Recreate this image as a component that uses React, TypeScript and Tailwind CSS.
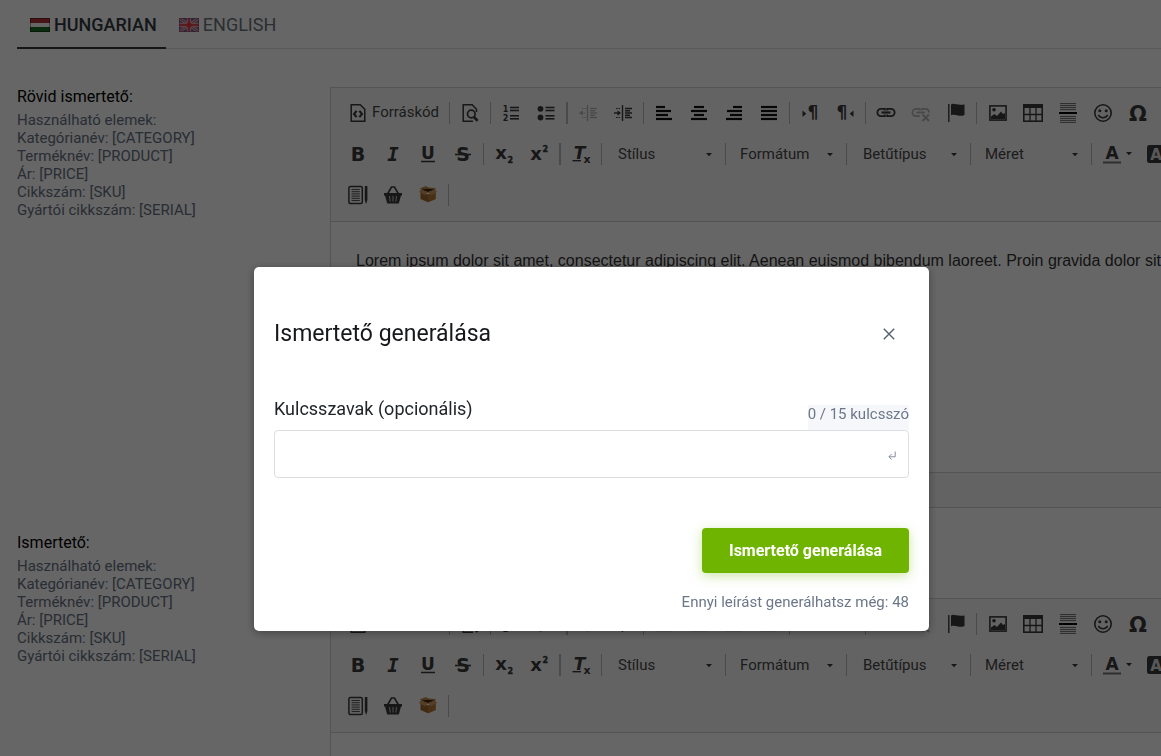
import React from "react";

type IconProps = { children: React.ReactNode; className?: string };

function Icon({ children, className = "" }: IconProps) {
  return (
    <svg viewBox="0 0 20 20" className={`size-5 shrink-0 overflow-visible ${className}`} aria-hidden="true">
      {children}
    </svg>
  );
}

const bold = { fontFamily: "DejaVu Sans", fontWeight: 700, textAnchor: "middle" as const };
const ink = "#3b3b3b";

const lines = (rows: [number, number, number][], w: number, color = ink) =>
  rows.map(([x1, x2, y]) => <path key={`${x1}-${y}`} d={`M${x1} ${y}H${x2}`} stroke={color} strokeWidth={w} />);

const docPath = "M3.2 1.7H12.2L16.8 6.3V18.3H3.2Z";

const icons: Record<string, React.ReactNode> = {
  source: (
    <g fill="none" stroke={ink}>
      <path d={docPath} strokeWidth="1.5" />
      <path d="M8.6 7.8L6 11L8.6 14.2M11.4 7.8L14 11L11.4 14.2" strokeWidth="2.1" />
    </g>
  ),
  preview: (
    <g fill="none" stroke={ink}>
      <path d="M16.5 9V6.3L12.2 1.7H3.2V18.3H13" strokeWidth="1.5" />
      <circle cx="11.3" cy="11" r="3.8" strokeWidth="1.7" />
      <path d="M14 14L17.6 17.8" strokeWidth="2.6" />
    </g>
  ),
  numbered: (
    <>
      {lines([[9, 18, 4.5], [9, 18, 7.5], [9, 18, 12.8], [9, 18, 15.8]], 1.6)}
      <text x="4.5" y="9" fontSize="8" fill={ink} {...bold}>1</text>
      <text x="4.5" y="18" fontSize="8" fill={ink} {...bold}>2</text>
    </>
  ),
  bullets: (
    <>
      {lines([[9.5, 18.5, 4.5], [9.5, 18.5, 7.5], [9.5, 18.5, 12.8], [9.5, 18.5, 15.8]], 1.6)}
      <circle cx="4.5" cy="5.8" r="2.9" fill={ink} />
      <circle cx="4.5" cy="14.5" r="2.9" fill={ink} />
    </>
  ),
  outdent: (
    <>
      <path d="M9.5 2V18" stroke={ink} strokeWidth="1.4" />
      <path d="M3 10H8M4 5.5H8M4 14.5H8" stroke={ink} strokeDasharray="1.5 1" />
      <path d="M4.8 7.3V12.7L1 10Z" fill={ink} />
      {lines([[12, 19, 5.5], [12, 17, 7.8], [12, 19, 10], [12, 17, 12.3], [12, 19, 14.5]], 1.3)}
    </>
  ),
  indent: (
    <>
      <path d="M9.5 2V18" stroke={ink} strokeWidth="1.4" />
      <path d="M1 10H5" stroke={ink} strokeWidth="1.4" />
      <path d="M3 5.5H8M3 14.5H8" stroke={ink} strokeDasharray="1.5 1" />
      <path d="M4.5 7.3V12.7L8 10Z" fill={ink} />
      {lines([[12, 19, 5.5], [12, 17, 7.8], [12, 19, 10], [12, 17, 12.3], [12, 19, 14.5]], 1.5)}
    </>
  ),
  left: <>{lines([[2, 11, 4], [2, 17, 8], [2, 14, 12], [2, 18, 16]], 2.2, "#111")}</>,
  center: <>{lines([[5, 15, 4], [2, 18, 8], [5, 15, 12], [2, 18, 16]], 2.2, "#111")}</>,
  right: <>{lines([[9, 18, 4], [3, 18, 8], [6, 18, 12], [2, 18, 16]], 2.2, "#111")}</>,
  justify: <>{lines([[2, 18, 4], [2, 18, 8], [2, 18, 12], [2, 18, 16]], 2.2, "#111")}</>,
  ltr: (
    <>
      <path d="M2.5 7.5V14L6.3 10.7Z" fill={ink} />
      <text x="13" y="14.5" fontSize="17" fill={ink} {...bold}>¶</text>
    </>
  ),
  rtl: (
    <>
      <path d="M18.5 7.5V14L14.7 10.7Z" fill={ink} />
      <text x="7" y="14.5" fontSize="17" fill={ink} {...bold}>¶</text>
    </>
  ),
  link: (
    <g fill="none" stroke={ink}>
      <path d="M8.8 7.5V5.9H5A3.6 3.6 0 0 0 5 13.1H8.8V11.5M11.2 7.5V5.9H15A3.6 3.6 0 0 1 15 13.1H11.2V11.5" strokeWidth="1.9" />
      <path d="M5.5 9.5H14.5" strokeWidth="2.2" />
    </g>
  ),
  unlink: (
    <g fill="none" stroke={ink}>
      <path d="M8.8 7.5V5.9H5A3.6 3.6 0 0 0 5 13.1H8.8M11.2 7.5V5.9H15A3.6 3.6 0 0 1 18 9.5" strokeWidth="1.7" />
      <path d="M5.5 9.5H14" strokeWidth="1.8" />
      <path d="M11.5 11.5L18 18M18 11.5L11.5 18" strokeWidth="2" />
    </g>
  ),
  flag: (
    <>
      <path d="M2.8 1V19" stroke={ink} strokeWidth="1.4" />
      <path d="M5 1.5C8-.5 10.5 2.8 18.5 1.4V12C13 14.5 9.5 10.4 5 12.3Z" fill={ink} />
    </>
  ),
  image: (
    <>
      <rect x="1.9" y="2.9" width="16.2" height="14.2" fill="none" stroke={ink} strokeWidth="1.6" />
      <circle cx="6" cy="6.8" r="1.8" fill={ink} />
      <path d="M3 16V13.5L6.5 11L9 13L13 8.5L15 11L17 10V16Z" fill={ink} />
    </>
  ),
  table: (
    <>
      <rect x="0.8" y="1.8" width="18.4" height="16.4" fill="none" stroke={ink} strokeWidth="1.6" />
      <path d="M1 3.2H19" stroke={ink} strokeWidth="3.6" />
      <path d="M7 4V18M13 4V18M1 11.5H19" stroke={ink} strokeWidth="1.3" />
    </>
  ),
  rule: (
    <>
      {lines([[2, 18, 0.6], [2, 18, 2.6], [2, 18, 4.6], [2, 18, 6.6], [2, 18, 13.4], [2, 18, 15.4], [2, 18, 17.4], [2, 18, 19.4]], 0.9, "#5a5a5a")}
      <path d="M1 10H19" stroke="#000" strokeWidth="2" />
    </>
  ),
  smiley: (
    <>
      <circle cx="10" cy="10" r="8.2" fill="none" stroke={ink} strokeWidth="1.6" />
      <circle cx="6.8" cy="7.8" r="1.5" fill={ink} />
      <circle cx="13.2" cy="7.8" r="1.5" fill={ink} />
      <path d="M5.3 12C7.5 15.5 12.5 15.5 14.7 12" fill="none" stroke={ink} strokeWidth="1.5" />
    </>
  ),
  omega: <text x="10" y="18" fontSize="21" fill={ink} {...bold}>Ω</text>,
  bold: <text x="10" y="17" fontSize="19" fill={ink} {...bold}>B</text>,
  italic: (
    <text x="10" y="17" fontSize="19" fill={ink} fontFamily="DejaVu Sans Mono" fontWeight="700" fontStyle="italic" textAnchor="middle">I</text>
  ),
  underline: (
    <>
      <text x="10" y="14.5" fontSize="17" fill={ink} {...bold}>U</text>
      <path d="M3 17.5H17" stroke={ink} strokeWidth="1.5" />
    </>
  ),
  strike: (
    <>
      <text x="10" y="17" fontSize="19" fill={ink} {...bold}>S</text>
      <path d="M2 10.5H18" stroke={ink} strokeWidth="1.6" />
    </>
  ),
  sub: (
    <>
      <text x="7" y="14.5" fontSize="18" fill={ink} {...bold}>x</text>
      <text x="16.3" y="18.8" fontSize="8" fill={ink} stroke={ink} strokeWidth="0.4" {...bold}>2</text>
    </>
  ),
  sup: (
    <>
      <text x="7" y="16" fontSize="18" fill={ink} {...bold}>x</text>
      <text x="16.3" y="8" fontSize="8" fill={ink} stroke={ink} strokeWidth="0.4" {...bold}>2</text>
    </>
  ),
  clear: (
    <>
      <text x="8.5" y="15" fontSize="17" fontStyle="italic" fill={ink} {...bold}>T</text>
      <path d="M1.5 16.7H10" stroke={ink} strokeWidth="1.4" />
      <text x="16" y="19" fontSize="11" fill={ink} {...bold}>x</text>
    </>
  ),
  color: (
    <>
      <text x="10" y="14.5" fontSize="17" fill={ink} {...bold}>A</text>
      <path d="M1 18.5H19" stroke="#777" strokeWidth="2" />
    </>
  ),
  background: (
    <>
      <rect x="1" y="1" width="18" height="18" rx="2.5" fill={ink} />
      <text x="10" y="15.5" fontSize="15" fill="#ddd" {...bold}>A</text>
    </>
  ),
  template: (
    <>
      <rect x="0.9" y="1.4" width="13.4" height="17.2" rx="1.5" fill="none" stroke={ink} strokeWidth="1.5" />
      {lines([[3.5, 11.8, 4.5], [3.5, 11.8, 6.7], [3.5, 11.8, 8.9], [3.5, 11.8, 11.1], [3.5, 11.8, 13.3], [3.5, 11.8, 15.5]], 1.1, "#555")}
      <path d="M16.8 1H19.4V15L18.1 19L16.8 15Z" fill={ink} />
    </>
  ),
  basket: (
    <>
      <path d="M4.5 9L8.5 2H11.5L15.5 9" fill="none" stroke={ink} strokeWidth="1.6" />
      <path d="M1 8H19V10.5H18L15.8 18.5H4.2L2 10.5H1Z" fill={ink} />
      <path d="M6.5 11L7.2 16.5M10 11V16.5M13.5 11L12.8 16.5" stroke="#bbb" strokeWidth="1.1" />
    </>
  ),
  box: (
    <>
      <path d="M2.5 7L10 9.5L17.5 7V14L10 17.2L2.5 14Z" fill="#a06a2c" />
      <path d="M10 9.5L17.5 7V14L10 17.2Z" fill="#b37a38" />
      <path d="M3 4.5L10 2.8L17 4.5L10 7.5Z" fill="#4a2c10" />
      <path d="M3 4.5L10 7L7.2 10.3L1 7ZM17 4.5L10 7L12.8 10.3L19 7Z" fill="#d39c5c" />
      <path d="M2 3.2L8 1L10 2.6L18 3L17 4.6L10 3.8L3 4.6Z" fill="#c18a48" />
    </>
  ),
};

function Tool({ name, label, disabled = false }: { name: string; label: string; disabled?: boolean }) {
  return (
    <button type="button" aria-label={label} disabled={disabled} className="flex h-[35px] w-[35px] shrink-0 items-center justify-center">
      <Icon className={disabled ? "opacity-35" : ""}>{icons[name]}</Icon>
    </button>
  );
}

function Sep({ wide = false }: { wide?: boolean }) {
  return <span className={`mr-[2px] ml-[3px] h-[22px] shrink-0 bg-[#b8b8b8] ${wide ? "w-[2px]" : "w-px"}`} />;
}

function Arrow({ className = "" }: { className?: string }) {
  return (
    <svg viewBox="0 0 6 4" className={`h-[4px] w-[6px] shrink-0 ${className}`} aria-hidden="true">
      <path d="M0 0H6L3 3.2Z" fill={ink} />
    </svg>
  );
}

function Combo({ label, wide = false }: { label: string; wide?: boolean }) {
  return (
    <label className={`grid h-[35px] shrink-0 items-center ${wide ? "w-[118px]" : "w-[115px]"}`}>
      <select
        aria-label={label}
        className={`col-start-1 row-start-1 h-full w-full appearance-none bg-transparent pt-[2px] text-[15px] text-[#484848] ${wide ? "pl-[14px]" : "pl-[12px]"}`}
      >
        <option>{label}</option>
      </select>
      <Arrow className="pointer-events-none col-start-1 row-start-1 mt-[2px] mr-[10px] justify-self-end" />
    </label>
  );
}

function Toolbar() {
  return (
    <div className="flex flex-col gap-[6px] overflow-hidden border-b border-[#d1d1d1] bg-[#f8f8f8] pt-[7px] pb-[9px] pl-[9px]">
      <div className="flex items-center">
        <button type="button" className="flex h-[35px] w-[106px] shrink-0 items-center gap-1 pl-[8px] text-[15px] text-[#484848]">
          <Icon>{icons.source}</Icon>
          Forráskód
        </button>
        <Sep />
        <Tool name="preview" label="Előnézet" />
        <Sep />
        <Tool name="numbered" label="Számozás" />
        <Tool name="bullets" label="Felsorolás" />
        <Sep wide />
        <Tool name="outdent" label="Behúzás csökkentése" disabled />
        <Tool name="indent" label="Behúzás növelése" />
        <Sep />
        <Tool name="left" label="Balra" />
        <Tool name="center" label="Középre" />
        <Tool name="right" label="Jobbra" />
        <Tool name="justify" label="Sorkizárt" />
        <Sep />
        <Tool name="ltr" label="Balról jobbra" />
        <Tool name="rtl" label="Jobbról balra" />
        <Sep />
        <Tool name="link" label="Hivatkozás" />
        <Tool name="unlink" label="Hivatkozás törlése" disabled />
        <Tool name="flag" label="Horgony" />
        <Sep />
        <div className="flex pl-px">
          <Tool name="image" label="Kép" />
          <Tool name="table" label="Táblázat" />
          <Tool name="rule" label="Elválasztóvonal" />
          <Tool name="smiley" label="Hangulatjelek" />
          <Tool name="omega" label="Speciális karakter" />
        </div>
      </div>
      <div className="flex items-center">
        <Tool name="bold" label="Félkövér" />
        <Tool name="italic" label="Dőlt" />
        <Tool name="underline" label="Aláhúzott" />
        <Tool name="strike" label="Áthúzott" />
        <Sep />
        <Tool name="sub" label="Alsó index" />
        <Tool name="sup" label="Felső index" />
        <Sep wide />
        <Tool name="clear" label="Formázás törlése" />
        <Sep />
        <Combo label="Stílus" wide />
        <Sep />
        <Combo label="Formátum" />
        <Sep />
        <Combo label="Betűtípus" wide />
        <Sep />
        <Combo label="Méret" />
        <Sep />
        <button type="button" aria-label="Betűszín" className="flex h-[35px] w-[43px] shrink-0 items-center gap-1 pl-[8px]">
          <Icon>{icons.color}</Icon>
          <Arrow />
        </button>
        <button type="button" aria-label="Háttérszín" className="flex h-[35px] w-[43px] shrink-0 items-center gap-1 pl-[9px]">
          <Icon>{icons.background}</Icon>
          <Arrow />
        </button>
      </div>
      <div className="flex items-center">
        <Tool name="template" label="Sablonok" />
        <Tool name="basket" label="Kosár" />
        <Tool name="box" label="Termék" />
        <Sep />
      </div>
    </div>
  );
}

function Editor({ label, text }: { label: string; text: string }) {
  return (
    <div className="border-y border-l border-[#d1d1d1]">
      <Toolbar />
      <div
        role="textbox"
        aria-label={label}
        className="h-[250px] overflow-hidden p-[25px] pt-[27px] font-['Liberation_Sans',Arial,sans-serif] text-base whitespace-nowrap text-[#333]"
      >
        {text}
      </div>
      <div className="h-[35px] border-t border-[#d1d1d1] bg-[#f8f8f8]" />
    </div>
  );
}

function Hints({ title }: { title: string }) {
  return (
    <div className="w-[313px] shrink-0">
      <h2 className="mb-1 text-base leading-5 text-black">{title}</h2>
      <p className="text-[15px] leading-[18px] text-[#677182]">
        Használható elemek:
        <br />
        Kategórianév: [CATEGORY]
        <br />
        Terméknév: [PRODUCT]
        <br />
        Ár: [PRICE]
        <br />
        Cikkszám: [SKU]
        <br />
        Gyártói cikkszám: [SERIAL]
      </p>
    </div>
  );
}

function HungarianFlag() {
  return (
    <svg viewBox="0 0 20 14" className="h-[14px] w-5" aria-hidden="true">
      <rect width="20" height="14" fill="#fff" />
      <rect width="20" height="5" fill="#b5323a" />
      <rect y="9" width="20" height="5" fill="#1d6b25" />
      <rect x="0.5" y="0.5" width="19" height="13" fill="none" stroke="#000" strokeOpacity="0.35" />
    </svg>
  );
}

function BritishFlag() {
  return (
    <svg viewBox="0 0 20 14" className="h-[14px] w-5" aria-hidden="true">
      <rect width="20" height="14" fill="#5a66a8" />
      <path d="M0 0L20 14M20 0L0 14" stroke="#dcc0cc" strokeWidth="3" />
      <path d="M0 0L20 14M20 0L0 14" stroke="#d8535c" strokeWidth="1.2" />
      <path d="M10 0V14M0 7H20" stroke="#e8c4ca" strokeWidth="4.4" />
      <path d="M10 0V14M0 7H20" stroke="#dc4a50" strokeWidth="2.6" />
      <circle cx="10" cy="7" r="2.6" fill="#e0383c" />
      <rect x="0.5" y="0.5" width="19" height="13" fill="none" stroke="#8a4a6a" strokeOpacity="0.6" />
    </svg>
  );
}

const lorem =
  "Lorem ipsum dolor sit amet, consectetur adipiscing elit. Aenean euismod bibendum laoreet. Proin gravida dolor sit amet lacus accumsan et viverra justo commodo.";

function GenerateDialog() {
  return (
    <div className="fixed inset-0 flex items-start justify-center bg-black/60 pt-[267px] pl-[22px]">
      <div
        role="dialog"
        aria-modal="true"
        aria-labelledby="dialog-title"
        className="w-[675px] max-w-full rounded-[5px] bg-white px-5 pb-[19px] shadow-[0_2px_10px_rgba(0,0,0,0.35)]"
      >
        <div className="flex items-center justify-between pt-[50px]">
          <h1 id="dialog-title" className="text-[23px] leading-[34px] text-[#16181b]">
            Ismertető generálása
          </h1>
          <button type="button" aria-label="Bezárás" className="mr-[14px]">
            <svg viewBox="0 0 12 12" className="size-3" aria-hidden="true">
              <path d="M0.8 0.8L11.2 11.2M11.2 0.8L0.8 11.2" stroke="#566070" strokeWidth="1.4" />
            </svg>
          </button>
        </div>
        <div className="mt-[44px] flex items-end justify-between">
          <label htmlFor="keywords" className="pb-2 text-[18px] leading-[27px] text-[#212529]">
            Kulcsszavak (opcionális)
          </label>
          <span className="bg-[#f5f7fa] pb-[7px] text-[15px] leading-[18px] text-[#6c7789]">0 / 15 kulcsszó</span>
        </div>
        <div className="flex h-12 items-center rounded border border-[#dcdee1] pr-[12px]">
          <input id="keywords" type="text" className="h-full min-w-0 flex-1 bg-transparent px-3 text-base outline-none" />
          <svg viewBox="0 0 8 10" className="mt-1 h-[10px] w-2" aria-hidden="true">
            <path d="M7.2 0.5V5.8H1M3.6 3L0.9 5.8L3.6 8.6" fill="none" stroke="#858e9b" strokeWidth="1" />
          </svg>
        </div>
        <div className="mt-[50px] flex flex-col items-end">
          <button
            type="button"
            className="h-[45px] rounded bg-[#6fb400] px-[27px] text-base font-bold text-white shadow-[0_3px_12px_rgba(111,180,0,0.35)]"
          >
            Ismertető generálása
          </button>
          <p className="mt-[19px] text-[15px] leading-5 text-[#6c7789]">Ennyi leírást generálhatsz még: 48</p>
        </div>
      </div>
    </div>
  );
}

export default function App() {
  return (
    <div className="h-screen overflow-hidden bg-white font-[Roboto,sans-serif]">
      <main className="pl-[17px]">
        <nav className="flex h-[49px] border-b border-[#dedede] text-[18px]">
          <a href="#hu" className="-mb-px flex items-center gap-1 border-b-2 border-[#343a40] pt-[2px] pr-[9px] pl-[13px] font-medium text-[#343a40]">
            <HungarianFlag />
            HUNGARIAN
          </a>
          <a href="#en" className="flex items-center gap-1 px-[13px] pt-px text-[#6c757d]">
            <BritishFlag />
            ENGLISH
          </a>
        </nav>
        <section className="mt-[38px] flex">
          <Hints title="Rövid ismertető:" />
          <div className="min-w-0 flex-1">
            <Editor label="Rövid ismertető" text={lorem} />
          </div>
        </section>
        <section className="mt-[25px] flex">
          <Hints title="Ismertető:" />
          <div className="min-w-0 flex-1 pt-[65px]">
            <Editor label="Ismertető" text="" />
          </div>
        </section>
      </main>
      <GenerateDialog />
    </div>
  );
}
